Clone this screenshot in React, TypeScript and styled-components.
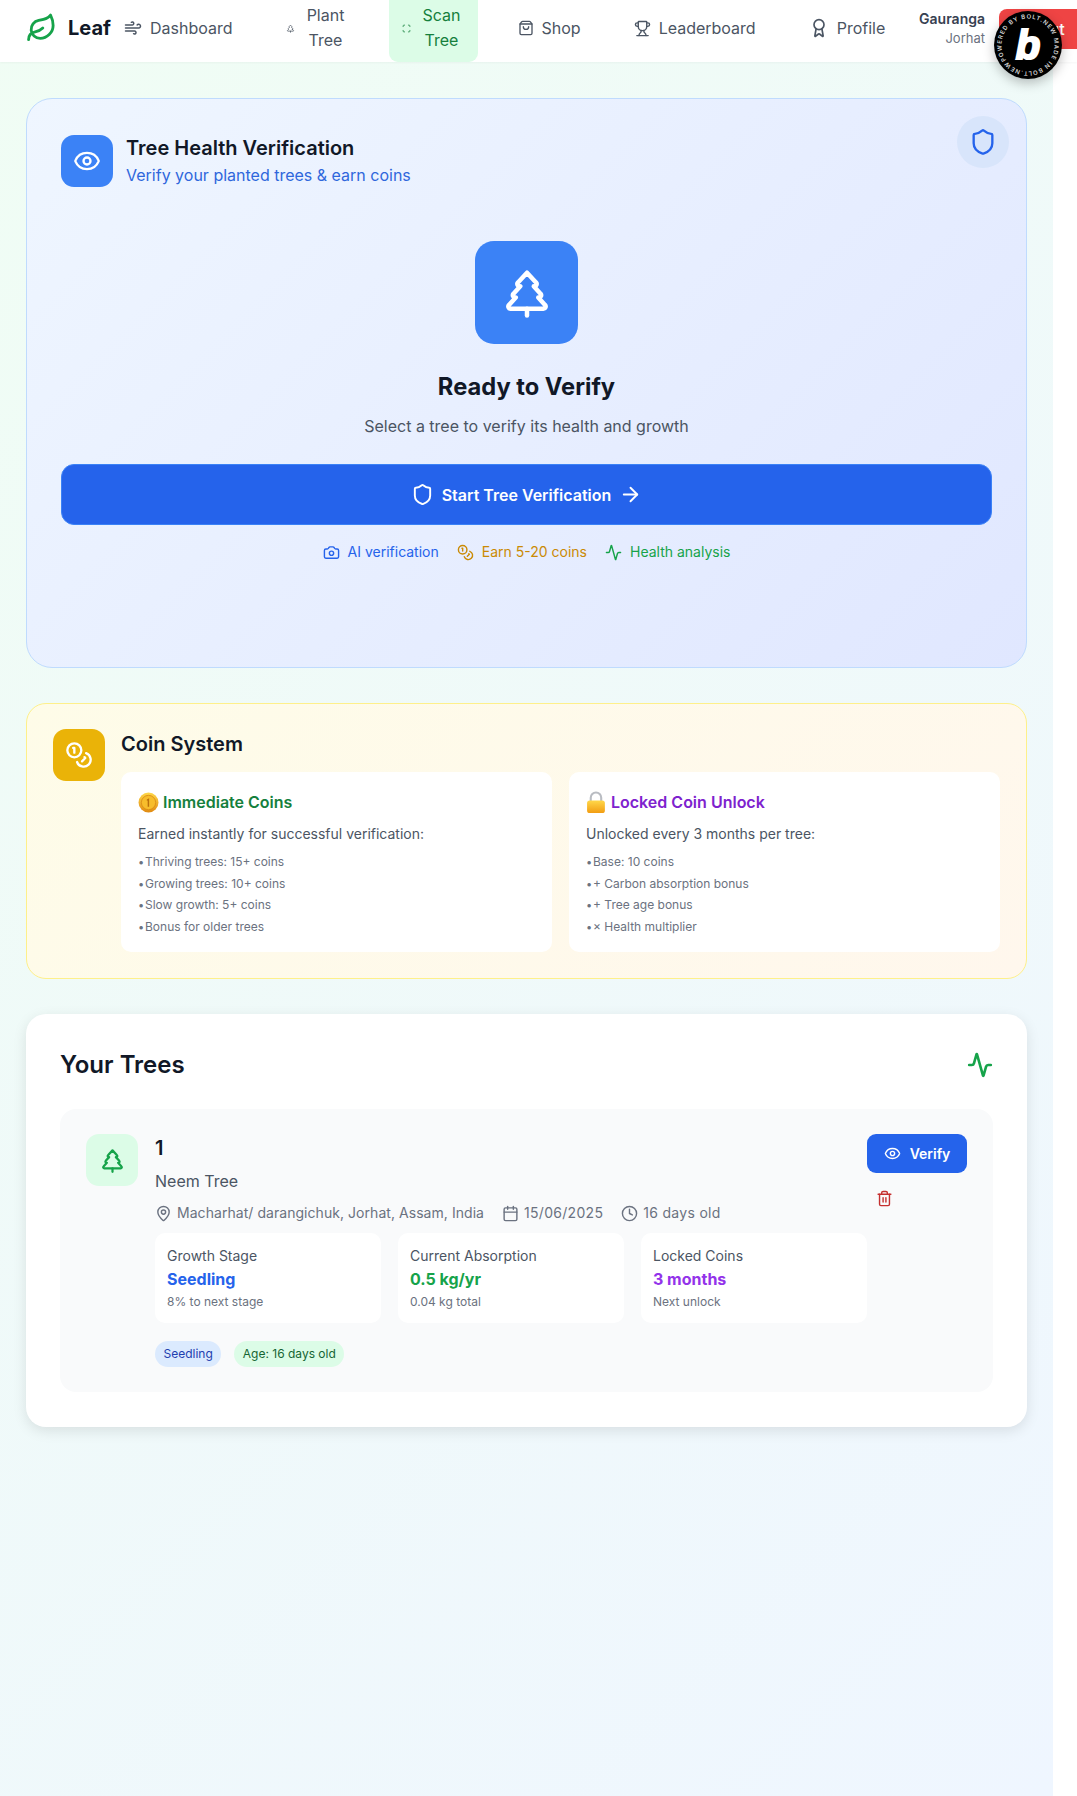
import React from "react";
import styled, { createGlobalStyle } from "styled-components";
import {
  Activity,
  ArrowRight,
  Award,
  Calendar,
  Camera,
  Clock,
  Coins,
  Eye,
  Leaf,
  MapPin,
  Scan,
  Shield,
  ShoppingBag,
  Trash2,
  TreePine,
  Trophy,
  Wind,
} from "lucide-react";

const GlobalStyle = createGlobalStyle`
  * { box-sizing: border-box; }
  html, body { margin: 0; padding: 0; background: #fff; overflow-x: hidden; }
  body { font-family: Inter, "Liberation Sans", sans-serif; color: #111827; }
`;

const navLinks = [
  { label: ["Dashboard"], icon: <Wind size={18} /> },
  { label: ["Plant", "Tree"], icon: <TreePine size={9} />, stacked: true },
  { label: ["Scan", "Tree"], icon: <Scan size={9} />, stacked: true, active: true },
  { label: ["Shop"], icon: <ShoppingBag size={16} /> },
  { label: ["Leaderboard"], icon: <Trophy size={17} /> },
  { label: ["Profile"], icon: <Award size={20} /> },
];

const coinCards = [
  {
    title: "Immediate Coins",
    tone: "#15803d",
    emoji: "coin",
    desc: "Earned instantly for successful verification:",
    items: [
      "Thriving trees: 15+ coins",
      "Growing trees: 10+ coins",
      "Slow growth: 5+ coins",
      "Bonus for older trees",
    ],
  },
  {
    title: "Locked Coin Unlock",
    tone: "#7e22ce",
    emoji: "lock",
    desc: "Unlocked every 3 months per tree:",
    items: [
      "Base: 10 coins",
      "+ Carbon absorption bonus",
      "+ Tree age bonus",
      "× Health multiplier",
    ],
  },
];

const stats = [
  { label: "Growth Stage", value: "Seedling", tone: "#2563eb", note: "8% to next stage" },
  { label: "Current Absorption", value: "0.5 kg/yr", tone: "#16a34a", note: "0.04 kg total" },
  { label: "Locked Coins", value: "3 months", tone: "#9333ea", note: "Next unlock" },
];

function CoinEmoji() {
  return (
    <svg width="21" height="21" viewBox="0 0 20 20">
      <defs>
        <linearGradient id="coinFill" x1="0" y1="0" x2="0" y2="1">
          <stop offset="0" stopColor="#ffd84a" />
          <stop offset="1" stopColor="#e08a12" />
        </linearGradient>
      </defs>
      <circle cx="10" cy="10" r="9.5" fill="url(#coinFill)" />
      <circle cx="10" cy="10" r="6.8" fill="#f7bd2c" stroke="#d98c14" strokeWidth="0.8" />
      <path d="M8.4 7.2 L10.6 6 V14 H9.2 V8 L8.4 8.4 Z" fill="#b96f0c" />
    </svg>
  );
}

function LockEmoji() {
  return (
    <svg width="21" height="22" viewBox="0 0 20 21">
      <defs>
        <linearGradient id="lockFill" x1="0" y1="0" x2="0" y2="1">
          <stop offset="0" stopColor="#ffd84a" />
          <stop offset="1" stopColor="#f29d12" />
        </linearGradient>
      </defs>
      <path d="M4.5 10 V6.5 a5 5 0 0 1 10 0 V10" fill="none" stroke="#b9bcc2" strokeWidth="2" />
      <rect x="1" y="9" width="17" height="12" rx="2.5" fill="url(#lockFill)" />
    </svg>
  );
}

function BoltBadge() {
  return (
    <svg width="68" height="68" viewBox="0 0 68 68">
      <defs>
        <path
          id="badgeRing"
          d="M34 34 m-26.5 0 a26.5 26.5 0 1 1 53 0 a26.5 26.5 0 1 1 -53 0"
          transform="rotate(-35 34 34)"
        />
      </defs>
      <circle cx="34" cy="34" r="34" fill="#000" />
      <text fontSize="6" fontWeight="600" fill="#d4d4d4" fontFamily="Inter, sans-serif" textLength="164">
        <textPath href="#badgeRing">POWERED BY BOLT.NEW MADE IN BOLT.NEW</textPath>
      </text>
      <text
        x="34"
        y="48"
        textAnchor="middle"
        fontSize="40"
        fontWeight="700"
        fontStyle="italic"
        fontFamily="'Liberation Sans', sans-serif"
        fill="#fff"
        stroke="#fff"
        strokeWidth="2.2"
      >
        b
      </text>
    </svg>
  );
}

export default function App() {
  return (
    <Page>
      <GlobalStyle />
      <Nav>
        <Brand>
          <Leaf size={32} color="#16a34a" strokeWidth={2.2} />
          <BrandName>Leaf</BrandName>
        </Brand>
        <NavLinks>
          {navLinks.map((link) => (
            <NavLink key={link.label.join(" ")} $active={link.active}>
              {link.icon}
              <NavLabel $stacked={link.stacked}>
                {link.label.map((line) => (
                  <span key={line}>{line}</span>
                ))}
              </NavLabel>
            </NavLink>
          ))}
        </NavLinks>
        <UserBlock>
          <UserName>Gauranga</UserName>
          <UserCity>Jorhat</UserCity>
        </UserBlock>
        <LogoutButton>Logout</LogoutButton>
      </Nav>
      <Badge>
        <BoltBadge />
      </Badge>

      <Main>
        <VerifyCard>
          <ShieldBubble>
            <Shield size={28} />
          </ShieldBubble>
          <Header>
            <IconTile $bg="#3b82f6" $color="#fff">
              <Eye size={28} />
            </IconTile>
            <div>
              <CardTitle>Tree Health Verification</CardTitle>
              <CardSubtitle>Verify your planted trees &amp; earn coins</CardSubtitle>
            </div>
          </Header>
          <Hero>
            <HeroTile>
              <TreePine size={54} />
            </HeroTile>
            <HeroTitle>Ready to Verify</HeroTitle>
            <HeroText>Select a tree to verify its health and growth</HeroText>
          </Hero>
          <StartButton>
            <Shield size={23} />
            <span>Start Tree Verification</span>
            <ArrowRight size={23} />
          </StartButton>
          <Features>
            <Feature $color="#2563eb">
              <Camera size={17} />
              AI verification
            </Feature>
            <Feature $color="#ca8a04">
              <Coins size={17} />
              Earn 5-20 coins
            </Feature>
            <Feature $color="#16a34a">
              <Activity size={17} />
              Health analysis
            </Feature>
          </Features>
        </VerifyCard>

        <CoinCard>
          <IconTile $bg="#eab308" $color="#fff">
            <Coins size={28} />
          </IconTile>
          <CoinBody>
            <CoinTitle>Coin System</CoinTitle>
            <CoinGrid>
              {coinCards.map((card) => (
                <CoinPanel key={card.title}>
                  <PanelHeading $color={card.tone}>
                    {card.emoji === "coin" ? <CoinEmoji /> : <LockEmoji />}
                    {card.title}
                  </PanelHeading>
                  <PanelText>{card.desc}</PanelText>
                  <PanelList>
                    {card.items.map((item) => (
                      <li key={item}>
                        <Dot>•</Dot>
                        {item}
                      </li>
                    ))}
                  </PanelList>
                </CoinPanel>
              ))}
            </CoinGrid>
          </CoinBody>
        </CoinCard>

        <TreesCard>
          <TreesHeader>
            <TreesTitle>Your Trees</TreesTitle>
            <Activity size={26} color="#16a34a" strokeWidth={2.4} />
          </TreesHeader>
          <TreeRow>
            <IconTile $bg="#dcfce7" $color="#16a34a">
              <TreePine size={27} />
            </IconTile>
            <TreeInfo>
              <TreeName>1</TreeName>
              <TreeSpecies>Neem Tree</TreeSpecies>
              <TreeMeta>
                <MetaItem $spacing={0.05}>
                  <MapPin size={17} />
                  Macharhat/ darangichuk, Jorhat, Assam, India
                </MetaItem>
                <MetaItem $spacing={0.3}>
                  <Calendar size={17} />
                  15/06/2025
                </MetaItem>
                <MetaItem $spacing={0.3}>
                  <Clock size={17} />
                  16 days old
                </MetaItem>
              </TreeMeta>
              <StatGrid>
                {stats.map((stat) => (
                  <StatCard key={stat.label}>
                    <StatLabel>{stat.label}</StatLabel>
                    <StatValue $color={stat.tone}>{stat.value}</StatValue>
                    <StatNote>{stat.note}</StatNote>
                  </StatCard>
                ))}
              </StatGrid>
              <Chips>
                <Chip $bg="#dbeafe" $color="#1e40af">Seedling</Chip>
                <Chip $bg="#dcfce7" $color="#166534">Age: 16 days old</Chip>
              </Chips>
            </TreeInfo>
            <TreeActions>
              <VerifyButton>
                <Eye size={17} />
                Verify
              </VerifyButton>
              <DeleteButton>
                <Trash2 size={17} />
              </DeleteButton>
            </TreeActions>
          </TreeRow>
        </TreesCard>
      </Main>
    </Page>
  );
}

const Page = styled.div`
  position: relative;
  width: 1053px;
  min-height: 1796px;
  background: linear-gradient(135deg, #f0fdf4 0%, #eff6ff 100%);
`;

const Nav = styled.nav`
  display: flex;
  align-items: center;
  width: 1077px;
  height: 62px;
  padding-left: 26px;
  background: #fff;
  overflow: hidden;
  box-shadow: 0 1px 2px rgba(0, 0, 0, 0.04);
`;

const Brand = styled.div`
  display: flex;
  align-items: center;
  gap: 11px;
  width: 85px;
  height: 56px;
  margin-bottom: 6px;
  flex-shrink: 0;
`;

const BrandName = styled.span`
  font-size: 20px;
  font-weight: 700;
  color: #111827;
`;

const NavLinks = styled.div`
  display: flex;
  gap: 27px;
  height: 62px;
  align-items: center;
`;

const NavLink = styled.a<{ $active?: boolean }>`
  display: flex;
  align-items: center;
  gap: 8px;
  height: 62px;
  padding: 0 13px 6px;
  font-size: 16px;
  line-height: 25px;
  border-radius: 0 0 9px 9px;
  color: ${(p) => (p.$active ? "#15803d" : "#4b5563")};
  background: ${(p) => (p.$active ? "#dcfce7" : "transparent")};
`;

const NavLabel = styled.span<{ $stacked?: boolean }>`
  display: flex;
  flex-direction: column;
  align-items: center;
  white-space: nowrap;
  width: ${(p) => (p.$stacked ? "46px" : "auto")};
`;

const UserBlock = styled.div`
  margin-left: auto;
  margin-bottom: 6px;
  text-align: right;
`;

const UserName = styled.div`
  font-size: 14px;
  line-height: 20px;
  font-weight: 600;
  color: #374151;
`;

const UserCity = styled.div`
  font-size: 13px;
  line-height: 19px;
  color: #6b7280;
`;

const LogoutButton = styled.button`
  width: 78px;
  height: 40px;
  margin: 0 0 4px 14px;
  padding: 0;
  border: 0;
  border-radius: 8px 0 0 8px;
  background: #ef4444;
  color: #fff;
  font: 500 16px Inter, sans-serif;
  flex-shrink: 0;
`;

const Badge = styled.div`
  position: absolute;
  top: 11px;
  left: 994px;
  width: 68px;
  height: 68px;
  border-radius: 50%;
  box-shadow: 0 4px 12px rgba(0, 0, 0, 0.25);
  z-index: 5;
`;

const Main = styled.main`
  display: flex;
  flex-direction: column;
  gap: 35px;
  padding: 36px 26px;
`;

const VerifyCard = styled.section`
  position: relative;
  height: 570px;
  padding: 36px 34px 0;
  border: 1px solid #bfdbfe;
  border-radius: 26px;
  background: linear-gradient(135deg, #eff6ff 0%, #e0e7ff 100%);
`;

const ShieldBubble = styled.div`
  position: absolute;
  top: 17px;
  right: 17px;
  width: 52px;
  height: 52px;
  display: flex;
  align-items: center;
  justify-content: center;
  border-radius: 50%;
  background: #d8e5fb;
  color: #2563eb;
`;

const Header = styled.header`
  display: flex;
  align-items: flex-start;
  gap: 13px;
`;

const IconTile = styled.div<{ $bg: string; $color: string }>`
  display: flex;
  align-items: center;
  justify-content: center;
  width: 52px;
  height: 52px;
  flex-shrink: 0;
  border-radius: 13px;
  background: ${(p) => p.$bg};
  color: ${(p) => p.$color};
`;

const CardTitle = styled.h2`
  margin: 0;
  font-size: 20px;
  line-height: 27px;
  font-weight: 600;
  color: #111827;
`;

const CardSubtitle = styled.p`
  margin: 2px 0 0;
  font-size: 16px;
  line-height: 23px;
  color: #2f67dc;
`;

const Hero = styled.div`
  display: flex;
  flex-direction: column;
  align-items: center;
  margin-top: 54px;
`;

const HeroTile = styled.div`
  display: flex;
  align-items: center;
  justify-content: center;
  width: 103px;
  height: 103px;
  border-radius: 19px;
  background: #3b82f6;
  color: #fff;
`;

const HeroTitle = styled.h3`
  margin: 25px 0 0;
  font-size: 23.7px;
  line-height: 36px;
  font-weight: 700;
  color: #111827;
`;

const HeroText = styled.p`
  margin: 8px 0 0;
  font-size: 16px;
  line-height: 26px;
  color: #4b5563;
`;

const StartButton = styled.button`
  display: flex;
  align-items: center;
  justify-content: center;
  gap: 8px;
  width: 100%;
  height: 61px;
  margin-top: 25px;
  border: 1px solid #3b82f6;
  border-radius: 13px;
  background: #2563eb;
  color: #fff;
  font: 600 16px Inter, sans-serif;
`;

const Features = styled.div`
  display: flex;
  justify-content: center;
  gap: 18px;
  margin-top: 16px;
`;

const Feature = styled.span<{ $color: string }>`
  display: flex;
  align-items: center;
  gap: 8px;
  font-size: 14px;
  line-height: 22px;
  color: ${(p) => p.$color};
`;

const CoinCard = styled.section`
  display: flex;
  gap: 16px;
  height: 276px;
  padding: 25px 26px;
  border: 1px solid #fef08a;
  border-radius: 20px;
  background: linear-gradient(135deg, #fefce8 0%, #fff7ed 100%);
`;

const CoinBody = styled.div`
  flex: 1;
`;

const CoinTitle = styled.h3`
  margin: 0 0 13px;
  font-size: 20px;
  line-height: 30px;
  font-weight: 600;
`;

const CoinGrid = styled.div`
  display: grid;
  grid-template-columns: 1fr 1fr;
  gap: 17px;
`;

const CoinPanel = styled.div`
  height: 180px;
  padding: 17px;
  border-radius: 10px;
  background: #fff;
`;

const PanelHeading = styled.h4<{ $color: string }>`
  display: flex;
  align-items: center;
  gap: 4px;
  height: 26px;
  margin: 0;
  font-size: 16px;
  line-height: 26px;
  font-weight: 600;
  color: ${(p) => p.$color};
`;

const PanelText = styled.p`
  margin: 8px 0 6px;
  font-size: 14px;
  line-height: 22px;
  color: #4b5563;
`;

const PanelList = styled.ul`
  margin: 0;
  padding: 0;
  list-style: none;
  font-size: 12px;
  line-height: 21.5px;
  color: #6b7280;

  li {
    height: 21.5px;
  }
`;

const Dot = styled.span`
  display: inline-block;
  width: 7px;
  font-size: 11px;
  line-height: 1;
`;

const TreesCard = styled.section`
  height: 413px;
  padding: 36px 34px;
  border-radius: 20px;
  background: #fff;
  box-shadow: 0 4px 14px rgba(0, 0, 0, 0.1);
`;

const TreesHeader = styled.header`
  display: flex;
  align-items: center;
  justify-content: space-between;
  height: 30px;
  margin-bottom: 29px;
`;

const TreesTitle = styled.h2`
  margin: 0;
  font-size: 24px;
  line-height: 30px;
  font-weight: 600;
`;

const TreeRow = styled.div`
  display: flex;
  align-items: flex-start;
  gap: 17px;
  height: 283px;
  padding: 25px 26px;
  border-radius: 16px;
  background: #f9fafb;
`;

const TreeInfo = styled.div`
  flex: 1;
  min-width: 0;
`;

const TreeName = styled.div`
  font-size: 20px;
  line-height: 29px;
  font-weight: 600;
`;

const TreeSpecies = styled.div`
  margin-top: 6px;
  font-size: 16px;
  line-height: 24px;
  color: #4b5563;
`;

const TreeMeta = styled.div`
  display: flex;
  gap: 18px;
  margin-top: 10px;
  font-size: 14px;
  line-height: 20px;
  color: #6b7280;
`;

const MetaItem = styled.span<{ $spacing: number }>`
  display: flex;
  align-items: center;
  gap: 5px;
  white-space: nowrap;
  letter-spacing: ${(p) => p.$spacing}px;
`;

const StatGrid = styled.div`
  display: grid;
  grid-template-columns: repeat(3, 1fr);
  gap: 17px;
  margin-top: 10px;
`;

const StatCard = styled.div`
  height: 90px;
  padding: 12px;
  border-radius: 10px;
  background: #fff;
`;

const StatLabel = styled.div`
  font-size: 14px;
  line-height: 22px;
  color: #4b5563;
`;

const StatValue = styled.div<{ $color: string }>`
  font-size: 16px;
  line-height: 25px;
  font-weight: 700;
  color: ${(p) => p.$color};
`;

const StatNote = styled.div`
  margin-top: 1px;
  font-size: 12px;
  line-height: 18px;
  color: #6b7280;
`;

const Chips = styled.div`
  display: flex;
  gap: 13px;
  margin-top: 18px;
`;

const Chip = styled.span<{ $bg: string; $color: string }>`
  height: 26px;
  padding: 0 8.5px;
  border-radius: 13px;
  font-size: 12px;
  line-height: 26px;
  background: ${(p) => p.$bg};
  color: ${(p) => p.$color};
`;

const TreeActions = styled.div`
  display: flex;
  flex-direction: column;
  align-items: flex-start;
  gap: 8px;
  width: 100px;
  margin-left: -17px;
`;

const VerifyButton = styled.button`
  display: flex;
  align-items: center;
  justify-content: center;
  gap: 9px;
  width: 100px;
  height: 39px;
  border: 0;
  border-radius: 9px;
  background: #2563eb;
  color: #fff;
  font: 600 14px Inter, sans-serif;
`;

const DeleteButton = styled.button`
  display: flex;
  padding: 9px;
  border: 0;
  background: transparent;
  color: #c53030;
`;
